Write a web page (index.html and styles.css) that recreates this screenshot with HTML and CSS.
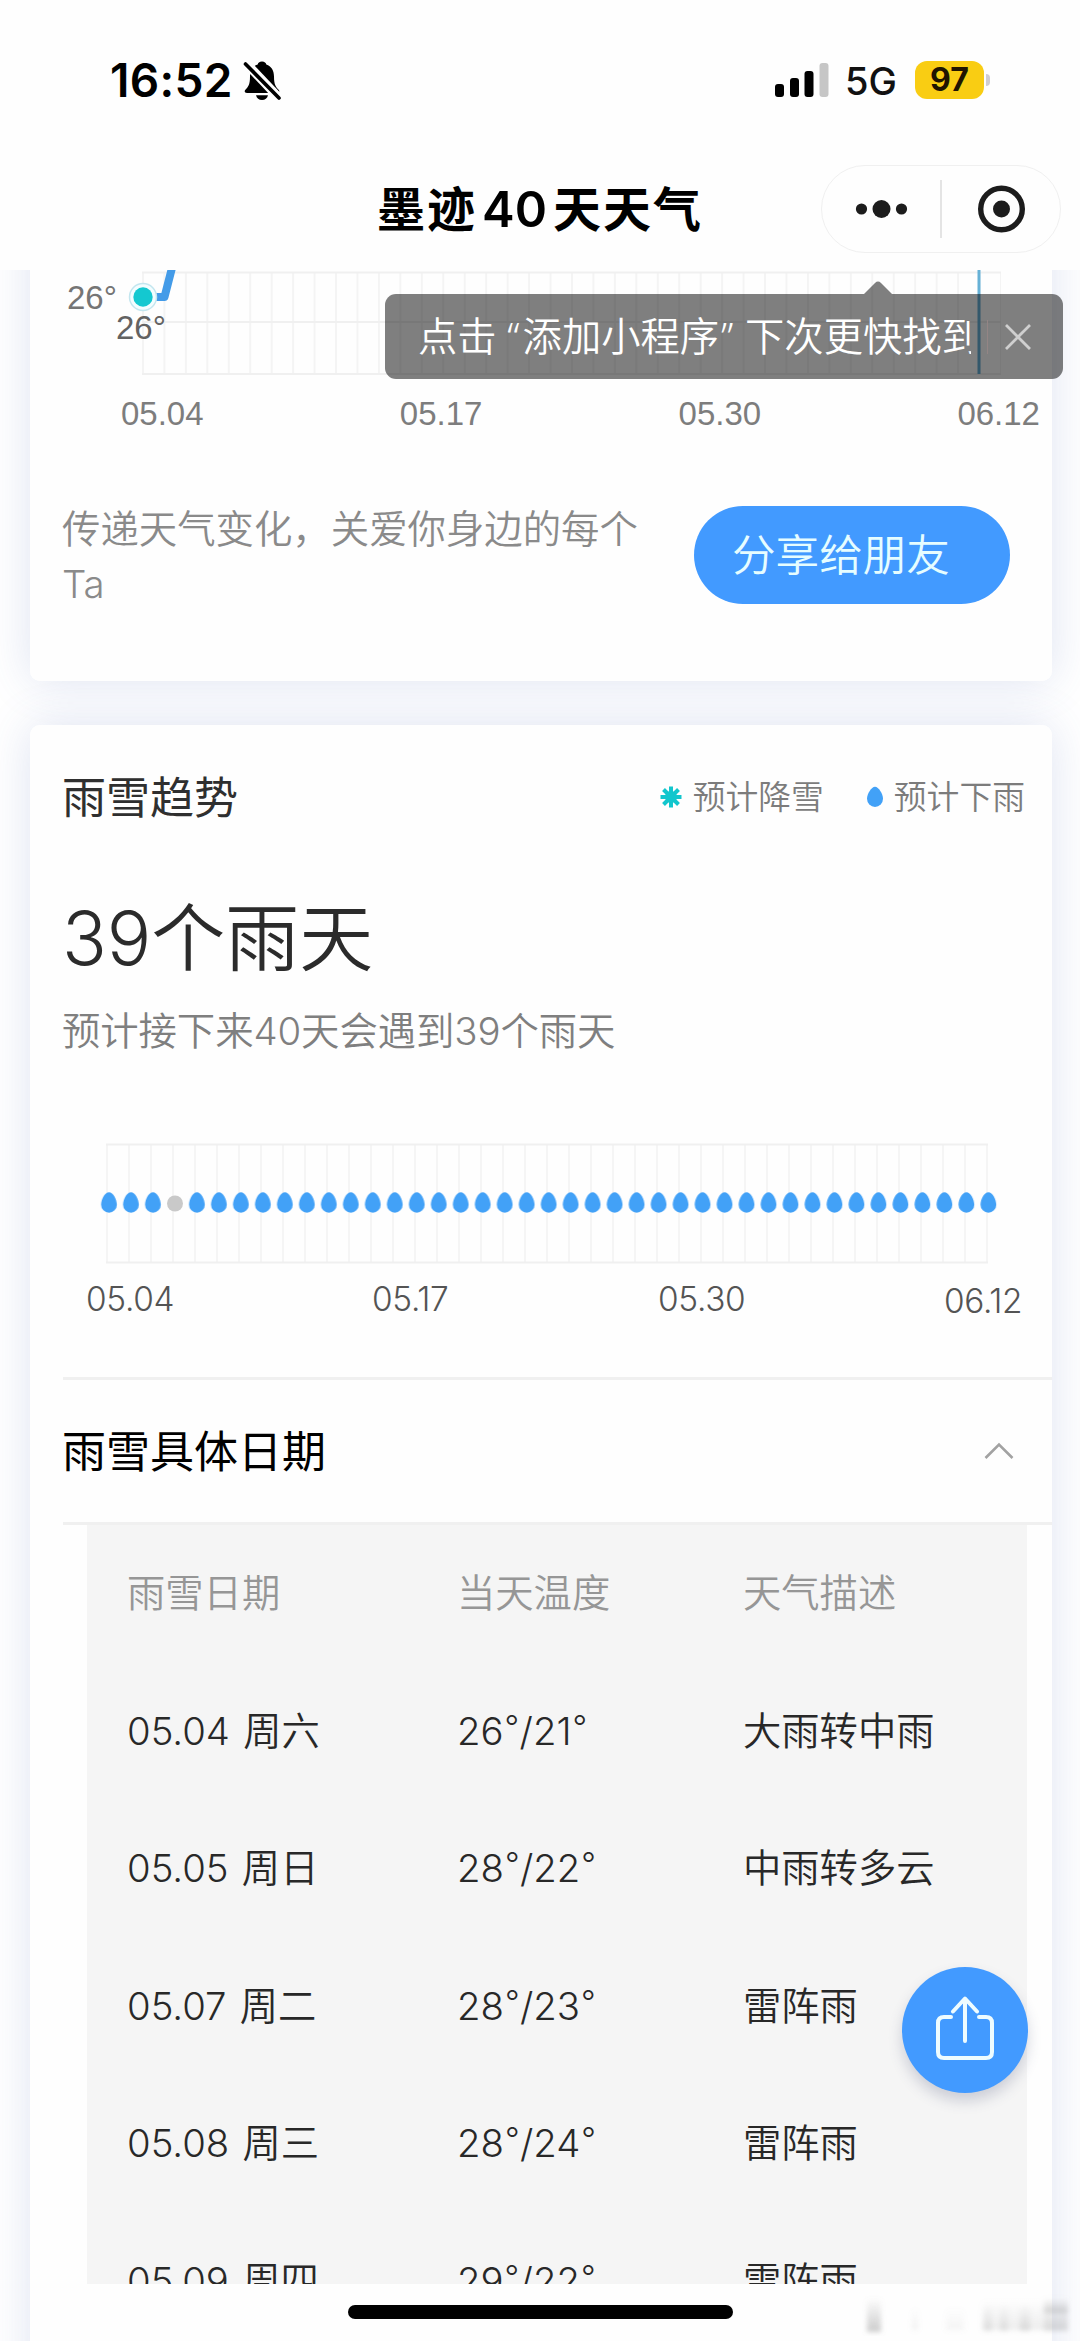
FILE: index.html
```html
<!DOCTYPE html>
<html lang="zh-CN">
<head>
<meta charset="utf-8">
<title>墨迹40天天气</title>
<link rel="stylesheet" href="styles.css">
</head>
<body>
<div class="screen">
  <header class="top">
    <div class="status">
      <span class="clock">16:52</span>
      <svg class="bell" width="38" height="42" viewBox="0 0 38 42">
        <path d="M19 2.5c2.6 0 4 1.4 4.3 3 5 1.600 7.700 6 7.700 12 0 8.500 2 10.500 4.600 13.300 1.400 1.600.600 3.200-1.600 3.200H4c-2.200 0-3-1.600-1.600-3.200C5 28 7 26 7 17.500c0-6 2.700-10.400 7.700-12 .300-1.600 1.700-3 4.300-3z"/>
        <path d="M13 36.300h12c-.600 3-3 4.700-6 4.700s-5.400-1.700-6-4.700z"/>
        <path class="bell-gap" d="M2 3l35 37"/>
        <path class="bell-slash" d="M2.500 5l33.500 34"/>
      </svg>
      <span class="spacer"></span>
      <svg class="signal" width="54" height="34" viewBox="0 0 54 34">
        <rect x="0" y="21" width="9" height="13" rx="3"/>
        <rect x="15" y="15" width="9" height="19" rx="3"/>
        <rect x="29.500" y="8" width="9" height="26" rx="3"/>
        <rect class="dim" x="44.500" y="0" width="9" height="34" rx="3"/>
      </svg>
      <span class="network">5G</span>
      <span class="battery">97</span>
      <span class="battery-nub"></span>
    </div>
    <div class="nav">
      <h1 class="nav-title">墨迹<span class="nav-num">40</span>天天气</h1>
      <div class="capsule">
        <svg width="118" height="86" viewBox="0 0 118 86">
          <circle cx="39.500" cy="43" r="5.600"/><circle cx="59.500" cy="43" r="9"/><circle cx="79.500" cy="43" r="5.600"/>
        </svg>
        <span class="capsule-line"></span>
        <svg width="118" height="86" viewBox="0 0 118 86">
          <circle class="ring" cx="59.500" cy="43" r="20.800"/><circle cx="59.500" cy="43" r="8.500"/>
        </svg>
      </div>
    </div>
  </header>

  <main class="scroll">
    <section class="card card-temp">
      <svg class="temp-chart" width="1022" height="112" viewBox="30 270 1022 112">
        <defs>
          <pattern id="tempGrid" x="142" y="0" width="21.450" height="400" patternUnits="userSpaceOnUse">
            <rect width="2" height="400" fill="#f4f4f4"/>
          </pattern>
        </defs>
        <rect x="142" y="272" width="859" height="102" fill="url(#tempGrid)"/>
        <path class="grid-line" d="M142 272.500H1001M142 322H1001M142 374H1001"/>
        <path class="today" d="M979 270V374"/>
        <path class="temp-line" d="M143 297H164.500L173.500 262"/>
        <circle class="dot-halo" cx="143" cy="297" r="13.500"/>
        <circle class="dot" cx="143" cy="297" r="9.700"/>
        <text class="axis" x="67" y="308.500">26°</text>
        <text class="value" x="116" y="338.500">26°</text>
      </svg>
      <div class="temp-dates"><span>05.04</span><span>05.17</span><span>05.30</span><span>06.12</span></div>
      <div class="share">
        <p class="share-text">传递天气变化，关爱你身边的每个Ta</p>
        <button class="share-btn">分享给朋友</button>
      </div>
    </section>

    <section class="card card-rain">
      <div class="rain-head">
        <h2 class="rain-title">雨雪趋势</h2>
        <div class="legend">
          <svg width="24" height="24" viewBox="-12 -12 24 24">
            <path class="snow" d="M0-10.500V10.500M-10.500 0H10.500M-7.500-7.500L7.500 7.500M-7.500 7.500L7.500-7.500"/><circle class="snow-core" r="6"/>
          </svg>
          <span class="legend-snow">预计降雪</span>
          <svg width="18" height="22" viewBox="0 0 18 22"><path class="drop" d="M9 .800C12.500.800 17 8 17 12.800a8 8.200 0 0 1-16 0C1 8 5.500.800 9 .800z"/></svg>
          <span>预计下雨</span>
        </div>
      </div>
      <p class="rain-count">39个雨天</p>
      <p class="rain-desc">预计接下来40天会遇到39个雨天</p>
      <svg class="rain-chart" width="1022" height="124" viewBox="30 1142 1022 124">
        <defs>
          <pattern id="rainGrid" x="106" y="0" width="22" height="1400" patternUnits="userSpaceOnUse">
            <rect width="2" height="1400" fill="#f5f5f5"/>
          </pattern>
          <pattern id="drops" x="97.800" y="1192" width="21.985" height="22" patternUnits="userSpaceOnUse">
            <path class="drop" d="M11.200 .300C15.400.300 19.100 7.500 19.100 12.700a7.900 8 0 0 1-15.800 0C3.300 7.500 7 .300 11.200.300z"/>
          </pattern>
        </defs>
        <rect x="106" y="1144" width="882" height="119" fill="url(#rainGrid)"/>
        <path class="grid-line" d="M106 1144.500H988M106 1262.500H988"/>
        <rect x="97.800" y="1192" width="65.955" height="22" fill="url(#drops)"/>
        <circle class="dry" cx="175" cy="1203.500" r="8"/>
        <rect x="185.740" y="1192" width="813.445" height="22" fill="url(#drops)"/>
      </svg>
      <div class="rain-dates"><span>05.04</span><span>05.17</span><span>05.30</span><span class="last">06.12</span></div>
      <div class="detail-head">
        <h2>雨雪具体日期</h2>
        <svg width="32" height="20" viewBox="0 0 32 20"><path class="chevron" d="M2.500 17L16 3.500L29.500 17"/></svg>
      </div>
      <div class="table">
        <div class="row head"><span>雨雪日期</span><span>当天温度</span><span>天气描述</span></div>
        <div class="row"><span>05.04 周六</span><span>26<i>°</i>/21<i>°</i></span><span>大雨转中雨</span></div>
        <div class="row"><span>05.05 周日</span><span>28<i>°</i>/22<i>°</i></span><span>中雨转多云</span></div>
        <div class="row"><span>05.07 周二</span><span>28<i>°</i>/23<i>°</i></span><span>雷阵雨</span></div>
        <div class="row"><span>05.08 周三</span><span>28<i>°</i>/24<i>°</i></span><span>雷阵雨</span></div>
        <div class="row"><span>05.09 周四</span><span>29<i>°</i>/22<i>°</i></span><span>雷阵雨</span></div>
      </div>
    </section>
  </main>

  <div class="tip">
    <svg class="tip-arrow" width="30" height="13" viewBox="0 0 30 13"><path d="M1 13L12 2Q15-.800 18 2L29 13z"/></svg>
    <p class="tip-text">点击<span class="quote open">“</span>添加小程序<span class="quote">”</span>下次更快找到</p>
    <span class="tip-line"></span>
    <svg class="tip-close" width="28" height="28" viewBox="0 0 28 28"><path d="M2 2L26 26M26 2L2 26"/></svg>
  </div>

  <button class="fab" aria-label="分享">
    <svg width="66" height="70" viewBox="0 0 66 70">
      <path d="M19 22H12Q6 22 6 28V57Q6 63 12 63H54Q60 63 60 57V28Q60 22 54 22H47M33 46V4M21 16.500L33 3.500L45 16.500"/>
    </svg>
  </button>

  <div class="home-bar"></div>
  <svg class="smudge" width="210" height="42" viewBox="0 0 210 42">
    <defs>
      <filter id="soft"><feGaussianBlur stdDeviation="2.500"/></filter>
      <linearGradient id="fade" x1="0" x2="0" y1="0" y2="1"><stop offset="0" stop-color="#999" stop-opacity="0"/><stop offset="1" stop-color="#999" stop-opacity=".5"/></linearGradient>
    </defs>
    <g filter="url(#soft)" fill="url(#fade)">
      <rect x="5" y="4" width="14" height="34"/>
      <rect x="50" y="14" width="6" height="22" opacity=".25"/>
      <rect x="84" y="14" width="18" height="22" opacity=".2"/>
      <rect x="122" y="10" width="8" height="27" opacity=".4"/>
      <rect x="138" y="10" width="8" height="27" opacity=".4"/>
      <rect x="158" y="10" width="10" height="27" opacity=".5"/>
      <rect x="120" y="6" width="86" height="30" opacity=".35"/>
      <rect x="182" y="4" width="24" height="15" opacity=".8"/>
      <rect x="182" y="12" width="24" height="25" opacity=".5"/>
    </g>
  </svg>
</div>
</body>
</html>
```
FILE: styles.css
```css
* { box-sizing: border-box; margin: 0; padding: 0; }

body {
  width: 1080px;
  background: #fff;
  font-family: Inter, "Noto Sans CJK SC", sans-serif;
  color: #2f2f2f;
}

h1, h2 { font-weight: 400; }
button { border: 0; font-family: inherit; }
svg { display: block; flex: none; }

.screen {
  position: relative;
  display: flex;
  flex-direction: column;
  height: 2341px;
  overflow: hidden;
}

/* status bar and navigation */
.top { height: 270px; background: #fefefe; flex: none; }

.status {
  display: flex;
  align-items: center;
  height: 160px;
  padding: 0 90px 0 110px;
}
.clock { font-size: 46px; font-weight: 600; color: #000; width: 133px; white-space: nowrap; letter-spacing: 0.3px; }
.bell-gap { stroke: #fefefe; stroke-width: 9; fill: none; }
.bell-slash { stroke: #000; stroke-width: 3.6; fill: none; stroke-linecap: round; }
.spacer { flex: 1; }
.signal .dim { fill: #c6c6c6; }
.network { width: 86px; padding: 2px 0 0 16px; font-size: 38px; font-weight: 500; color: #111; }
.battery {
  width: 69px;
  height: 38px;
  border-radius: 12px;
  background: #f9cd13;
  color: #201400;
  font-size: 32px;
  line-height: 38px;
  font-weight: 700;
  text-align: center;
}
.battery-nub { width: 4px; height: 12px; margin-left: 2px; border-radius: 0 6px 6px 0; background: #cfcdd2; }

.nav {
  display: grid;
  grid-template-columns: 377px 1fr auto;
  align-items: center;
  height: 98px;
  padding-right: 19px;
}
.nav-title {
  grid-column: 2;
  padding-top: 2px;
  font-size: 48px;
  line-height: 96px;
  font-weight: 700;
  color: #000;
  letter-spacing: 2px;
  white-space: nowrap;
}
.nav-num { margin: 0 6px 0 5px; font-size: 49px; font-weight: 600; letter-spacing: 0; }
.capsule {
  display: flex;
  align-items: center;
  width: 240px;
  height: 88px;
  border: 1px solid #f0f0f0;
  border-radius: 44px;
  fill: #1c1c1c;
}
.capsule-line { width: 2px; height: 58px; background: #e4e4e4; }
.ring { fill: none; stroke: #1c1c1c; stroke-width: 5.4; }

/* cards */
.scroll {
  position: relative;
  z-index: 0;
  flex: 1;
  padding: 0 28px 0 30px;
  overflow: hidden;
}
.card { position: relative; }
.card::before,
.card::after {
  content: "";
  position: absolute;
  z-index: -1;
  inset: 0;
  border-radius: 10px;
}
.card::before { box-shadow: 0 0 46px rgba(70, 100, 180, 0.18); }
.card::after { background: #fefefe; }
.card-temp { height: 411px; }
.card-temp::before,
.card-temp::after { top: -60px; }
.card-rain { height: 1700px; margin-top: 44px; }

.grid-line { stroke: #f0f0f0; stroke-width: 2; fill: none; }
.today { stroke: #66b1d6; stroke-width: 3; }
.temp-line { stroke: #439be8; stroke-width: 8; fill: none; stroke-linejoin: round; }
.dot-halo { fill: #f2fdff; stroke: #c3e6ef; stroke-width: 1.5; }
.dot { fill: #14c8d0; }
.axis, .value { font: 33px "Liberation Sans", Arial, sans-serif; fill: #757575; }
.value { fill: #626262; }

.temp-dates {
  display: flex;
  justify-content: space-between;
  padding: 13px 12px 0 91px;
  font: 33px/38px "Liberation Sans", Arial, sans-serif;
  color: #7d7d7d;
}
.share {
  display: flex;
  justify-content: space-between;
  align-items: flex-start;
  padding: 69px 42px 0 32px;
}
.share-text { width: 590px; font-size: 38.4px; line-height: 55px; font-weight: 350; color: #8a8a8a; }
.share-btn {
  width: 316px;
  height: 98px;
  margin-top: 4px;
  padding: 0 0 6px 38px;
  border-radius: 49px;
  background: #429aff;
  color: #e6fdff;
  font-size: 43.6px;
  text-align: left;
  font-weight: 350;
}

/* rain and snow trend */
.rain-head {
  display: flex;
  justify-content: space-between;
  align-items: center;
  height: 144px;
  padding: 0 27px 0 32px;
}
.rain-title { padding-bottom: 5px; font-size: 44px; }
.legend { display: flex; align-items: center; font-size: 32.8px; font-weight: 350; color: #7c7c7c; }
.legend span { padding-bottom: 5px; }
.legend svg { margin-right: 10px; }
.legend .legend-snow { margin-right: 42px; }
.snow { stroke: #12c6cd; stroke-width: 4; }
.snow-core { fill: #12c6cd; }
.drop { fill: #42a1f7; }
.dry { fill: #c9c9c9; }

.rain-count { height: 142px; padding-left: 32px; font-size: 74px; line-height: 139px; font-weight: 350; color: #2b2b2b; }
.rain-desc { height: 44px; padding-left: 32px; font-size: 38.4px; line-height: 40px; font-weight: 350; color: #7f7f7f; letter-spacing: -0.1px; }
.rain-chart { margin-top: 87px; }
.rain-dates {
  display: grid;
  grid-template-columns: repeat(4, 286px);
  height: 111px;
  padding: 12px 0 0 56px;
  font-size: 33.4px;
  line-height: 42px;
  font-weight: 300;
  letter-spacing: -0.3px;
  color: #545454;
}
.rain-dates .last { padding-top: 2px; }

.detail-head {
  display: flex;
  justify-content: space-between;
  align-items: center;
  height: 148px;
  margin-left: 33px;
  padding-right: 37px;
  border-top: 3px solid #f0f0f0;
  border-bottom: 3px solid #f0f0f0;
  color: #000;
}
.detail-head h2 { margin-left: -1px; padding-bottom: 4px; font-size: 44px; }
.chevron { stroke: #a2a2a2; stroke-width: 2.6; fill: none; }

.table { height: 759px; margin: 0 25px 0 57px; background: #f5f5f5; overflow: hidden; }
.row {
  display: grid;
  grid-template-columns: 330px 286px 1fr;
  height: 137.5px;
  padding-left: 40px;
  font-size: 38.3px;
  line-height: 137.5px;
  font-weight: 350;
  word-spacing: 2.5px;
  color: #282828;
}
.head { color: #969696; }
.row i { display: inline-block; width: 16px; padding-left: 1px; font-size: 32px; font-style: normal; line-height: 1; position: relative; top: -6px; }

/* overlays */
.tip {
  position: absolute;
  z-index: 2;
  left: 385px;
  top: 294px;
  display: flex;
  align-items: center;
  width: 678px;
  height: 85px;
  padding-left: 33px;
  border-radius: 11px;
  background: rgba(0, 0, 0, 0.5);
  color: #fff;
}
.tip-arrow { position: absolute; left: 478px; top: -13px; fill: rgba(0, 0, 0, 0.5); }
.tip-text { width: 553px; overflow: hidden; white-space: nowrap; font-size: 39.3px; line-height: 60px; font-weight: 350; }
.quote { display: inline-block; width: 26px; padding-left: 2px; font-family: "Noto Sans", sans-serif; line-height: 1; }
.quote.open { text-align: right; padding: 0 3px 0 0; }
.tip-line { width: 1px; height: 34px; margin-left: 16px; background: #938585; }
.tip-close { margin-left: 16px; fill: none; stroke: #cfcfcf; stroke-width: 2.8; }

.fab {
  position: absolute;
  z-index: 2;
  left: 902px;
  top: 1967px;
  display: flex;
  align-items: center;
  justify-content: center;
  width: 126px;
  height: 126px;
  border-radius: 50%;
  background: #429aff;
  box-shadow: 0 8px 14px rgba(60, 70, 110, 0.22);
}
.fab path { fill: none; stroke: #eefcff; stroke-width: 4; stroke-linecap: round; stroke-linejoin: round; }

.home-bar {
  position: absolute;
  z-index: 2;
  left: 348px;
  top: 2305px;
  width: 385px;
  height: 14px;
  border-radius: 7px;
  background: #000;
}
.smudge { position: absolute; z-index: 2; left: 862px; top: 2294px; }
```
